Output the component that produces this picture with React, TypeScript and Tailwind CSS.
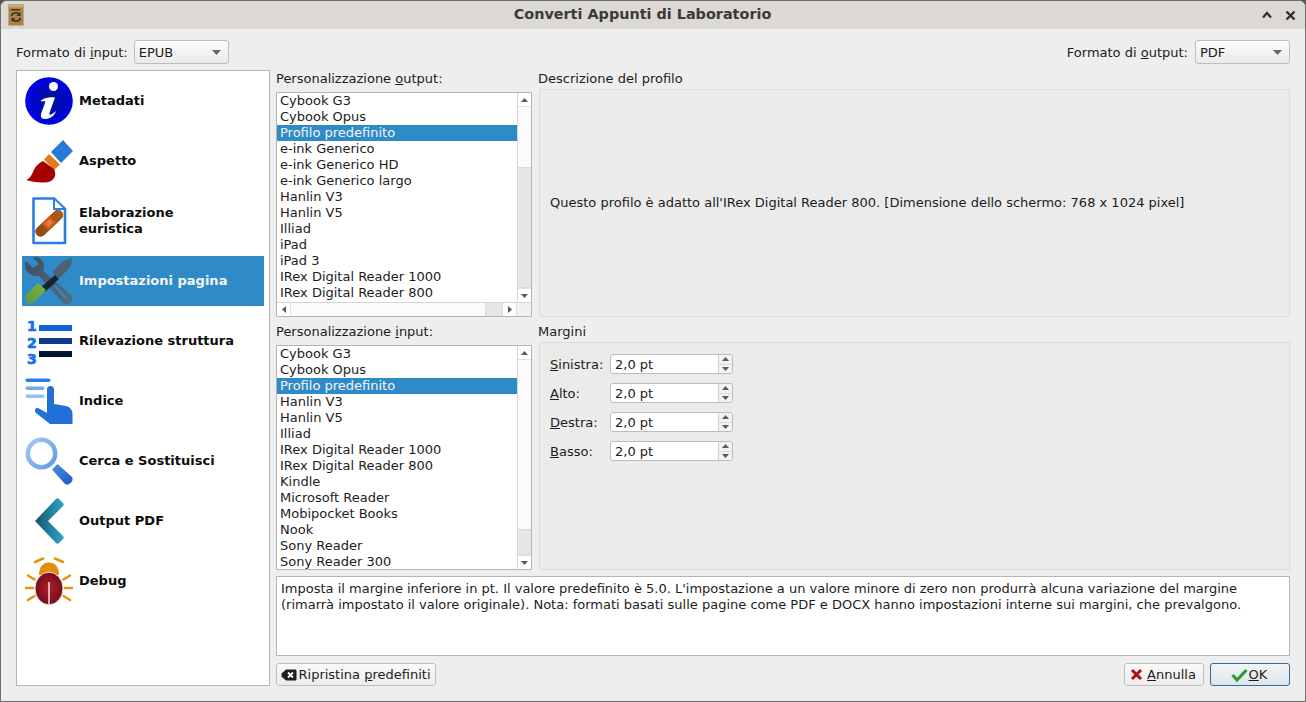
import React from 'react';

const outputProfiles = ['Cybook G3', 'Cybook Opus', 'Profilo predefinito', 'e-ink Generico', 'e-ink Generico HD', 'e-ink Generico largo', 'Hanlin V3', 'Hanlin V5', 'Illiad', 'iPad', 'iPad 3', 'IRex Digital Reader 1000', 'IRex Digital Reader 800'];
const inputProfiles = ['Cybook G3', 'Cybook Opus', 'Profilo predefinito', 'Hanlin V3', 'Hanlin V5', 'Illiad', 'IRex Digital Reader 1000', 'IRex Digital Reader 800', 'Kindle', 'Microsoft Reader', 'Mobipocket Books', 'Nook', 'Sony Reader', 'Sony Reader 300'];

const InfoIcon = () => (
  <svg width="48" height="48" viewBox="0 0 48 48">
    <defs>
      <radialGradient id="infoBg" cx="0.55" cy="0.5" r="0.55">
        <stop offset="0" stopColor="#00128c" />
        <stop offset="1" stopColor="#0000ee" />
      </radialGradient>
    </defs>
    <circle cx="24" cy="24" r="23.8" fill="url(#infoBg)" />
    <circle cx="28.5" cy="9.5" r="4.5" fill="#fff" />
    <path d="M16 23.5C20 20.5 24 20 30 20.5L24.5 36C24 38 25.5 38 27 37C28.5 36 30 35 31 34C30 38 25 42.5 19.5 42C15.5 41.5 15.5 38.5 16.5 35.5L20.5 24.5C19 24 17.5 24 16 24.5Z" fill="#fff" />
  </svg>
);

const BrushIcon = () => (
  <svg width="48" height="48" viewBox="0 0 48 48">
    <path d="M38 3L48 14L36 26L26 15Z" fill="#2878d6" />
    <path d="M24 17L35 27.5L29 33L19 22.5Z" fill="#e57a1f" />
    <path d="M18 24C10 28 9 33 7 37C5 41 3 42 1 43C8 45 20 47 26 44C31 41 31 36 29 32Z" fill="#a80000" />
  </svg>
);

const DocIcon = () => (
  <svg width="48" height="48" viewBox="0 0 48 48">
    <defs>
      <linearGradient id="bandage" x1="0" y1="1" x2="1" y2="0">
        <stop offset="0" stopColor="#8f4a16" />
        <stop offset="1" stopColor="#a85c1a" />
      </linearGradient>
    </defs>
    <path d="M8.5 1.5H29L40 12V46H8.5Z" fill="#fff" stroke="#2a7de1" strokeWidth="2.6" strokeLinejoin="round" />
    <path d="M28 1.5V13H40Z" fill="#2a7de1" />
    <path d="M30 3.5V11H38Z" fill="#fff" />
    <line x1="15.5" y1="34.5" x2="33" y2="18" stroke="url(#bandage)" strokeWidth="10.5" strokeLinecap="round" />
    <rect x="19.5" y="20.5" width="9" height="11" fill="#d9591a" transform="rotate(45 24 26)" />
    <rect x="21.5" y="23" width="5" height="6" fill="#ea7a3a" transform="rotate(45 24 26)" />
  </svg>
);

const ToolsIcon = () => (
  <svg width="48" height="48" viewBox="0 0 48 48">
    <defs>
      <linearGradient id="steel" x1="0" y1="0" x2="1" y2="1">
        <stop offset="0" stopColor="#3d4f5e" />
        <stop offset="1" stopColor="#566d80" />
      </linearGradient>
      <linearGradient id="grip" x1="0" y1="1" x2="1" y2="0">
        <stop offset="0" stopColor="#5a9a3c" />
        <stop offset="1" stopColor="#7db544" />
      </linearGradient>
    </defs>
    <path d="M10 0C15 0 19 4 19 9C19 11 19 12 18 14L46 38C48 41 47 44 45 46C42 48 39 47 37 45L14 19C6 20 0 15 0 8C0 6 0.5 5 1 4L8 11L14 7L8 1C9 0 9.5 0 10 0Z" fill="url(#steel)" />
    <path d="M30 29L41 41" stroke="#2e8bc8" strokeWidth="2.4" strokeLinecap="round" />
    <path d="M47 1L46 9L37 19L33 21L28 16L29 13L38 4Z" fill="#4d6172" />
    <path d="M30 18L34 22L20 35L15 31Z" fill="#17242e" />
    <path d="M13 26L21 33L9 45C6 47 3 47 1 44C0 42 0 39 2 37Z" fill="url(#grip)" />
  </svg>
);

const ListIcon = () => (
  <svg width="48" height="48" viewBox="0 0 48 48" className="overflow-visible">
    <defs>
      <linearGradient id="bar3" x1="0" y1="0" x2="0" y2="1">
        <stop offset="0" stopColor="#0a1a3c" />
        <stop offset="1" stopColor="#02112a" />
      </linearGradient>
    </defs>
    <g fontFamily="DejaVu Sans, sans-serif" fontWeight="700" fontSize="14" fill="#1470ee" stroke="#1470ee" strokeWidth="0.7">
      <text x="2" y="14">1</text>
      <text x="2" y="30.5">2</text>
      <text x="2" y="47">3</text>
    </g>
    <rect x="14" y="8" width="33" height="6" fill="#1263dc" />
    <rect x="14" y="21" width="33" height="6" fill="#0b3b8c" />
    <rect x="14" y="34" width="33" height="6" fill="url(#bar3)" />
  </svg>
);

const IndexIcon = () => (
  <svg width="48" height="48" viewBox="0 0 48 48">
    <rect x="0.5" y="1.5" width="25" height="3.6" rx="1.8" fill="#2a7de1" />
    <rect x="0.5" y="9.5" width="19" height="3.6" rx="1.8" fill="#74aaec" />
    <rect x="0.5" y="17.5" width="19" height="3.6" rx="1.8" fill="#97c0f2" />
    <path d="M22 12C22 8 29 8 29 12V27L41 29C45 30 47.5 33 47.5 37V47H25L11 36C8.5 33 11 30 14 31.5L22 36Z" fill="#2170d8" />
  </svg>
);

const SearchIcon = () => (
  <svg width="48" height="48" viewBox="0 0 48 48">
    <defs>
      <linearGradient id="ring" x1="0" y1="0" x2="1" y2="1">
        <stop offset="0" stopColor="#a8c9f2" />
        <stop offset="1" stopColor="#5e9ae6" />
      </linearGradient>
      <linearGradient id="handle" x1="0" y1="0" x2="1" y2="1">
        <stop offset="0" stopColor="#4c8fe0" />
        <stop offset="1" stopColor="#1a5cc4" />
      </linearGradient>
    </defs>
    <circle cx="16.5" cy="16.5" r="13.7" fill="#fff" stroke="url(#ring)" strokeWidth="4.5" />
    <path d="M27 32.5L32.5 27L46.5 39.5C48 41 48 43 46.5 45L45 46.5C43 48 41 48 39.5 46.5Z" fill="url(#handle)" />
  </svg>
);

const ChevronIcon = () => (
  <svg width="48" height="48" viewBox="0 0 48 48">
    <defs>
      <linearGradient id="chev" x1="0" y1="0.5" x2="1" y2="0.5">
        <stop offset="0" stopColor="#17546f" />
        <stop offset="1" stopColor="#2da6c9" />
      </linearGradient>
    </defs>
    <path d="M10 24L31 2C32 1 33 1 34 2L38 6C39 7 39 8 38 9L23 24L38 39C39 40 39 41 38 42L34 46C33 47 32 47 31 46Z" fill="url(#chev)" />
  </svg>
);

const BugIcon = () => (
  <svg width="48" height="48" viewBox="0 0 48 48">
    <defs>
      <radialGradient id="bugBody" cx="0.5" cy="0.5" r="0.55">
        <stop offset="0" stopColor="#b01c2c" />
        <stop offset="1" stopColor="#6e0e18" />
      </radialGradient>
    </defs>
    <g stroke="#e8930c" strokeWidth="2.6" strokeLinecap="round" fill="none">
      <path d="M10 5L18 1.5" />
      <path d="M38 5L30 1.5" />
      <path d="M3 18.5L9.5 22.5" />
      <path d="M45 18.5L38.5 22.5" />
      <path d="M1 31H8" />
      <path d="M47 31H40" />
      <path d="M3 43L9.5 39" />
      <path d="M45 43L38.5 39" />
    </g>
    <path d="M14 18C14 10 18 5.5 24 5.5C30 5.5 34 10 34 18Z" fill="#e28c0a" />
    <ellipse cx="24" cy="31.5" rx="14" ry="16.3" fill="url(#bugBody)" stroke="#fff" strokeWidth="0.8" />
    <rect x="23.2" y="25" width="1.6" height="22.5" fill="#eed4d4" />
  </svg>
);

const AppIcon = () => (
  <svg width="16" height="22" viewBox="0 0 16 22">
    <rect x="0.5" y="0.5" width="15" height="21" fill="#a9814b" stroke="#c9a875" />
    <rect x="0.5" y="0.5" width="15" height="3" fill="#c9a875" />
    <rect x="3" y="5" width="9" height="1.6" fill="#4c3a1f" />
    <path d="M3.5 12C4 9 9 7.5 11.5 10.5M12.5 14C12 17 7 18.5 4.5 15.5" stroke="#3d3320" strokeWidth="1.6" fill="none" />
    <path d="M12.5 8V12H8.5ZM3.5 18V14H7.5Z" fill="#3d3320" />
  </svg>
);

const navItems = [
  { label: <>Metadati</>, icon: <InfoIcon /> },
  { label: <>Aspetto</>, icon: <BrushIcon /> },
  { label: <>Elaborazione<br />euristica</>, icon: <DocIcon /> },
  { label: <>Impostazioni pagina</>, icon: <ToolsIcon />, active: true },
  { label: <>Rilevazione struttura</>, icon: <ListIcon /> },
  { label: <>Indice</>, icon: <IndexIcon /> },
  { label: <>Cerca e Sostituisci</>, icon: <SearchIcon /> },
  { label: <>Output PDF</>, icon: <ChevronIcon /> },
  { label: <>Debug</>, icon: <BugIcon /> },
];

const Arrow = ({ dir }: { dir: 'up' | 'down' | 'left' | 'right' }) => {
  const points = { up: '0,4 3.5,0 7,4', down: '0,0 7,0 3.5,4', left: '4,0 4,7 0,3.5', right: '0,0 4,3.5 0,7' }[dir];
  const size = dir === 'up' || dir === 'down' ? { w: 7, h: 4 } : { w: 4, h: 7 };
  return (
    <svg width={size.w} height={size.h} viewBox={`0 0 ${size.w} ${size.h}`}>
      <polygon points={points} fill="#5a5a5a" />
    </svg>
  );
};

const VScroll = ({ before, handle, after }: { before: number; handle: number; after: number }) => (
  <div className="w-[14px] shrink-0 flex flex-col bg-white border-l border-[#d6d6d6]">
    <div className="h-[14px] flex items-center justify-center border-b border-[#e2e2e2]"><Arrow dir="up" /></div>
    <div className="bg-[#fbfbfb]" style={{ height: before }} />
    <div className="bg-[#e6e6e6] border-y border-[#dadada]" style={{ height: handle }} />
    <div className="bg-[#fbfbfb]" style={{ height: after }} />
    <div className="h-[14px] flex items-center justify-center border-t border-[#e2e2e2]"><Arrow dir="down" /></div>
  </div>
);

const ProfileList = ({ items }: { items: string[] }) => (
  <div className="flex flex-col flex-1 min-h-0">
    {items.map((name, i) => (
      <div key={name} className={`h-4 leading-4 pl-[3px] whitespace-nowrap ${i === 2 ? 'bg-[#2e8bc8] text-[#f4f4f4]' : ''}`}>{name}</div>
    ))}
  </div>
);

const Combo = ({ value }: { value: string }) => (
  <div className="w-[95px] h-[24px] rounded-[3px] border border-[#bdbdbd] bg-gradient-to-b from-[#fcfcfc] to-[#eaeaea] flex items-center justify-between pl-[4px] pr-[7px]">
    <span className="pt-px">{value}</span>
    <svg width="9" height="5" viewBox="0 0 9 5"><polygon points="0,0 9,0 4.5,5" fill="#666" /></svg>
  </div>
);

const Spin = ({ label }: { label: React.ReactNode }) => (
  <div className="flex items-center h-5">
    <div className="w-[60px] pt-[2px]">{label}</div>
    <div className="w-[123px] h-[20px] rounded-[3px] border border-[#bdbdbd] bg-white flex">
      <div className="flex-1 pl-[4px] leading-[19px]">2,0 pt</div>
      <div className="w-[14px] border-l border-[#cfcfcf] bg-[#f2f2f2] rounded-r-[3px] flex flex-col">
        <div className="flex-1 flex items-center justify-center border-b border-[#dcdcdc]"><Arrow dir="up" /></div>
        <div className="flex-1 flex items-center justify-center"><Arrow dir="down" /></div>
      </div>
    </div>
  </div>
);

const Btn = ({ className, children }: { className: string; children: React.ReactNode }) => (
  <div className={`h-[23px] rounded-[3px] border bg-gradient-to-b flex items-center justify-center pr-[2px] ${className}`}>{children}</div>
);

export default function App() {
  return (
    <div className="w-[1306px] h-[702px] overflow-hidden bg-[#555] text-[13px] text-[#1c1c1c]" style={{ fontFamily: '"DejaVu Sans", sans-serif' }}>
      <div className="h-full rounded-t-[7px] border border-[#6f6f6f] bg-[#eeeeee] flex flex-col overflow-hidden">
        <div className="h-[28px] shrink-0 bg-[#dcd8d3] flex items-center relative">
          <div className="ml-[7px]"><AppIcon /></div>
          <div className="absolute left-[0px] w-[1283px] text-center text-[14.4px] font-bold text-[#3a3a3a]">Converti Appunti di Laboratorio</div>
          <div className="ml-auto mr-[9px] flex items-center gap-[13px]">
            <svg width="10" height="8" viewBox="0 0 10 8"><path d="M1 6.5L5 2L9 6.5" stroke="#2f2f2f" strokeWidth="2.2" fill="none" /></svg>
            <svg width="11" height="11" viewBox="0 0 11 11"><path d="M1.5 1.5L9.5 9.5M9.5 1.5L1.5 9.5" stroke="#2f2f2f" strokeWidth="2.3" /></svg>
          </div>
        </div>

        <div className="flex-1 min-h-0 flex flex-col pt-[11px] px-[15px]">
          <div className="flex items-center h-[24px] shrink-0">
            <span className="pt-px">Formato di <u>i</u>nput:</span>
            <div className="ml-[6px]"><Combo value="EPUB" /></div>
            <span className="ml-auto mr-[7px] pt-px">Formato di <u>o</u>utput:</span>
            <Combo value="PDF" />
          </div>

          <div className="flex gap-[6px] mt-[6px]">
            <div className="w-[254px] h-[616px] shrink-0 bg-white border border-[#b5b5b5] p-[5px] flex flex-col gap-[10px]">
              {navItems.map((item, i) => (
                <div key={i} className={`h-[50px] flex items-center font-bold pl-[3px] ${item.active ? 'bg-[#2e8bc8] text-[#f4f4f4]' : 'text-[#0c0c0c]'}`}>
                  <div className="w-[48px] h-[48px] shrink-0">{item.icon}</div>
                  <div className="ml-[6px] leading-4">{item.label}</div>
                </div>
              ))}
            </div>

            <div className="w-[1014px] flex flex-col">
              <div className="flex gap-[6px] h-[247px]">
                <div className="w-[256px] shrink-0 flex flex-col">
                  <div className="h-[22px] leading-[17px]">Personalizzazione <u>o</u>utput:</div>
                  <div className="h-[225px] border border-[#b5b5b5] bg-white flex flex-col">
                    <div className="flex h-[209px]">
                      <ProfileList items={outputProfiles} />
                      <VScroll before={60} handle={121} after={0} />
                    </div>
                    <div className="h-[14px] flex border-t border-[#d6d6d6]">
                      <div className="w-[14px] flex items-center justify-center border-r border-[#e2e2e2]"><Arrow dir="left" /></div>
                      <div className="flex-1 bg-[#fbfbfb]" />
                      <div className="w-[18px] bg-[#e6e6e6] border-x border-[#dadada]" />
                      <div className="w-[14px] flex items-center justify-center border-r border-[#e2e2e2]"><Arrow dir="right" /></div>
                      <div className="w-[14px] bg-[#f0f0f0]" />
                    </div>
                  </div>
                </div>
                <div className="flex-1 flex flex-col">
                  <div className="h-[19px] leading-[17px]">Descrizione del profilo</div>
                  <div className="h-[228px] ml-px bg-[#ebebeb] border border-[#dcdcdc] rounded-[2px] flex items-center px-[10px] pb-[1px]">
                    Questo profilo è adatto all'IRex Digital Reader 800. [Dimensione dello schermo: 768 x 1024 pixel]
                  </div>
                </div>
              </div>

              <div className="flex gap-[6px] mt-[6px] h-[247px]">
                <div className="w-[256px] shrink-0 flex flex-col">
                  <div className="h-[22px] leading-[17px]">Personalizzazione <u>i</u>nput:</div>
                  <div className="h-[225px] border border-[#b5b5b5] bg-white flex">
                    <ProfileList items={inputProfiles} />
                    <VScroll before={169} handle={26} after={0} />
                  </div>
                </div>
                <div className="flex-1 flex flex-col">
                  <div className="h-[19px] leading-[17px]">Margini</div>
                  <div className="h-[228px] ml-px bg-[#ebebeb] border border-[#dcdcdc] rounded-[2px] pl-[10px] pt-[11px] flex flex-col gap-[9px]">
                    <Spin label={<><u>S</u>inistra:</>} />
                    <Spin label={<><u>A</u>lto:</>} />
                    <Spin label={<><u>D</u>estra:</>} />
                    <Spin label={<><u>B</u>asso:</>} />
                  </div>
                </div>
              </div>

              <div className="mt-[6px] h-[80px] border border-[#b5b5b5] bg-white pl-[4px] pt-[4px] leading-4">
                Imposta il margine inferiore in pt. Il valore predefinito è 5.0. L'impostazione a un valore minore di zero non produrrà alcuna variazione del margine<br />
                (rimarrà impostato il valore originale). Nota: formati basati sulle pagine come PDF e DOCX hanno impostazioni interne sui margini, che prevalgono.
              </div>

              <div className="mt-[7px] flex">
                <Btn className="w-[160px] pl-[2px] border-[#bdbdbd] from-[#fafafa] to-[#ececec]">
                  <svg width="16" height="12" viewBox="0 0 16 12" className="mr-[1px]">
                    <path d="M5 0.5H14C15 0.5 15.5 1 15.5 2V10C15.5 11 15 11.5 14 11.5H5L0.5 7.5V4.5Z" fill="#1f1f1f" />
                    <path d="M7 3.5L12 8.5M12 3.5L7 8.5" stroke="#fff" strokeWidth="1.8" />
                  </svg>
                  <span className="pt-px">Ripristina <u>p</u>redefiniti</span>
                </Btn>
                <Btn className="ml-auto w-[80px] border-[#bdbdbd] from-[#fafafa] to-[#ececec]">
                  <svg width="13" height="13" viewBox="0 0 13 13" className="mr-[4px]">
                    <path d="M2 2L11 11M11 2L2 11" stroke="#b30d0d" strokeWidth="3" />
                  </svg>
                  <span className="pt-px"><u>A</u>nnulla</span>
                </Btn>
                <Btn className="ml-[6px] w-[80px] border-[#2a6f9e] from-[#f2f5f7] to-[#dfe5ea]">
                  <svg width="17" height="14" viewBox="0 0 17 14" className="mr-[1px]">
                    <path d="M1.5 7L6 12L15.5 2" stroke="#2a9a2a" strokeWidth="3" fill="none" />
                  </svg>
                  <span className="pt-px"><u>O</u>K</span>
                </Btn>
              </div>
            </div>
          </div>
        </div>
      </div>
    </div>
  );
}
